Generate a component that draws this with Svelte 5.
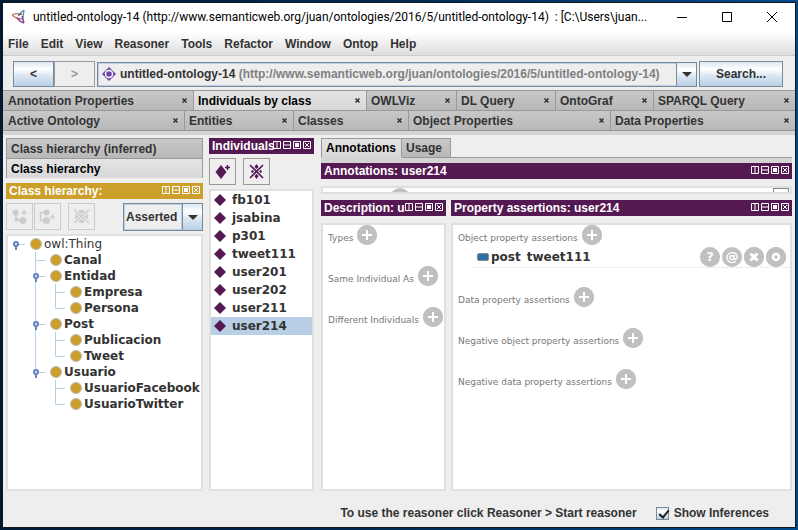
<script>
  const menus = ['File', 'Edit', 'View', 'Reasoner', 'Tools', 'Refactor', 'Window', 'Ontop', 'Help'];

  const tabRows = [
    [
      { label: 'Annotation Properties', share: 190 },
      { label: 'Individuals by class', share: 173, active: true },
      { label: 'OWLViz', share: 90 },
      { label: 'DL Query', share: 99 },
      { label: 'OntoGraf', share: 98 },
      { label: 'SPARQL Query', share: 142 },
    ],
    [
      { label: 'Active Ontology', share: 181 },
      { label: 'Entities', share: 109 },
      { label: 'Classes', share: 115 },
      { label: 'Object Properties', share: 202 },
      { label: 'Data Properties', share: 185 },
    ],
  ];
  const columns = (row) => row.map((tab) => `minmax(0, ${tab.share}fr)`).join(' ');

  // guides, one letter per column: o/m/e = handle (root, middle, end),
  // t/l = branch (middle, end), i = passing line, s = empty
  const tree = [
    { label: 'owl:Thing', guides: 'o', root: true },
    { label: 'Canal', guides: 'st' },
    { label: 'Entidad', guides: 'sm' },
    { label: 'Empresa', guides: 'sit' },
    { label: 'Persona', guides: 'sil' },
    { label: 'Post', guides: 'sm' },
    { label: 'Publicacion', guides: 'sit' },
    { label: 'Tweet', guides: 'sil' },
    { label: 'Usuario', guides: 'se' },
    { label: 'UsuarioFacebook', guides: 'sst' },
    { label: 'UsuarioTwitter', guides: 'ssl' },
  ];

  const lines = {
    o: 'M10 8.5H17',
    m: 'M7.5 0V16M10 8.5H17',
    e: 'M7.5 0V8M10 8.5H17',
    t: 'M7.5 0V16M8 8.5H17',
    l: 'M7.5 0V8.5H17',
    i: 'M7.5 0V16',
    s: '',
  };

  const individuals = ['fb101', 'jsabina', 'p301', 'tweet111', 'user201', 'user202', 'user211', 'user214'];
  let selected = $state('user214');
  let showInferences = $state(true);

  const description = ['Types', 'Same Individual As', 'Different Individuals'];
  const assertions = [
    { label: 'Object property assertions', rows: [{ property: 'post', value: 'tweet111' }] },
    { label: 'Data property assertions', rows: [] },
    { label: 'Negative object property assertions', rows: [] },
    { label: 'Negative data property assertions', rows: [] },
  ];
</script>

{#snippet paneHeader(title, gold)}
  <header class="pane-header" class:gold>
    <h2>{title}</h2>
    <div class="pane-tools">
      <button aria-label="Split vertically"><svg width="8" height="8"><path d="M.5 .5H7.5V7.5H.5ZM4 1V7" /></svg></button>
      <button aria-label="Split horizontally"><svg width="8" height="8"><path d="M.5 .5H7.5V7.5H.5ZM1 4H7" /></svg></button>
      <button aria-label="Float"><svg width="8" height="8"><path d="M.5 .5H7.5V7.5H.5Z" /><rect x="2" y="2" width="4" height="4" /></svg></button>
      <button aria-label="Close"><svg width="8" height="8"><path d="M.5 .5H7.5V7.5H.5ZM2 2L6 6M6 2L2 6" /></svg></button>
    </div>
  </header>
{/snippet}

{#snippet addButton(name)}
  <button class="round" aria-label={'Add ' + name}>
    <svg width="20" height="20"><circle cx="10" cy="10" r="10" /><path d="M10 5V15M5 10H15" /></svg>
  </button>
{/snippet}

<div class="desktop">
  <div class="window">
    <div class="titlebar">
      <svg class="logo" width="16" height="16" viewBox="0 0 16 16" fill="none">
        <path d="M1 6Q5 4 11 5M1 6Q5 10 12 10" stroke="#b9795a" stroke-width="1.2" />
        <path d="M13 1Q10 3 7 7M13 1L12 9" stroke="#4f8fb8" stroke-width="1.2" />
        <path d="M13 14Q9 13 6 9M13 14L11 7" stroke="#80409a" stroke-width="1.4" />
        <path d="M7 6L11 5" stroke="#8a6a60" stroke-width="1.4" />
      </svg>
      <h1>untitled-ontology-14 (http://www.semanticweb.org/juan/ontologies/2016/5/untitled-ontology-14) &nbsp;: [C:\Users\juan...</h1>
      <div class="controls">
        <button aria-label="Minimize"><svg width="12" height="12"><path d="M1 6.5H11" /></svg></button>
        <button aria-label="Maximize"><svg width="12" height="12"><path d="M1.5 1.5H10.5V10.5H1.5Z" /></svg></button>
        <button aria-label="Close window"><svg width="12" height="12"><path d="M1 1L11 11M11 1L1 11" /></svg></button>
      </div>
    </div>

    <nav class="menubar">
      {#each menus as menu}<button>{menu}</button>{/each}
    </nav>

    <div class="toolbar">
      <div class="history">
        <button class="metal" aria-label="Back">&lt;</button>
        <button class="metal" aria-label="Forward" disabled>&gt;</button>
      </div>
      <div class="ontology">
        <svg width="14" height="14"><path d="M7 0L14 7L7 14L0 7Z" fill="#6d45a3" /><circle cx="7" cy="7" r="3.5" fill="none" stroke="#fff" stroke-width="1.4" /></svg>
        <span class="uri">untitled-ontology-14 <small>(http://www.semanticweb.org/juan/ontologies/2016/5/untitled-ontology-14)</small></span>
        <span class="arrow"><svg width="10" height="5"><path d="M0 0H10L5 5Z" /></svg></span>
        <select aria-label="Active ontology"><option>untitled-ontology-14</option></select>
      </div>
      <button class="metal search">Search...</button>
    </div>

    <div class="tabs">
      {#each tabRows as row}
        <div class="tab-row" style:grid-template-columns={columns(row)}>
          {#each row as tab}
            <div class="tab" class:active={tab.active}>
              <button class="tab-name">{tab.label}</button>
              <button class="tab-close" aria-label={'Close ' + tab.label}><svg width="5" height="5"><path d="M.5 .5L4.5 4.5M4.5 .5L.5 4.5" /></svg></button>
            </div>
          {/each}
        </div>
      {/each}
    </div>

    <main>
      <section class="classes">
        <div class="stack-tabs">
          <button>Class hierarchy (inferred)</button>
          <button class="on">Class hierarchy</button>
        </div>
        {@render paneHeader('Class hierarchy:', true)}
        <div class="actions">
          <button class="tool off" aria-label="Add subclass">
            <svg width="17" height="17"><circle cx="4.5" cy="4.5" r="3" /><circle cx="12" cy="12.5" r="3.500" /><circle cx="5.500" cy="11.500" r="2" /><path d="M5 5V12H12M10.500 4.500H15.500M13 2V7" /></svg>
          </button>
          <button class="tool off" aria-label="Add sibling class">
            <svg width="17" height="17"><circle cx="7.5" cy="4.500" r="3" /><circle cx="7.500" cy="12.5" r="3.5" /><path d="M7 4.500H1.500V12.500H7M11 9H16M13.500 6.500V11.500" /></svg>
          </button>
          <button class="tool off last" aria-label="Delete class">
            <svg width="17" height="17"><circle cx="8.5" cy="8.5" r="6.500" /><path class="cut" d="M1 2L16 15M16 2L1 15" /><path d="M1 2L16 15M16 2L1 15" /></svg>
          </button>
          <div class="mode">
            <select aria-label="Hierarchy mode"><option>Asserted</option><option>Inferred</option></select>
            <span class="arrow"><svg width="10" height="5"><path d="M0 0H10L5 5Z" /></svg></span>
          </div>
        </div>
        <ul class="box tree">
          {#each tree as node}
            <li class:root={node.root}>
              {#each node.guides as g}
                <svg width="20" height="16">
                  <path class="line" d={lines[g]} />
                  {#if 'ome'.includes(g)}
                    <circle cx="8" cy="8" r="2" class="knob" /><path d="M8 10V14" class="stem" />
                  {/if}
                </svg>
              {/each}
              <svg width="16" height="16"><circle cx="8" cy="8" r="5.5" class="class-dot" /></svg>
              <span>{node.label}</span>
            </li>
          {/each}
        </ul>
      </section>

      <section class="individuals">
        {@render paneHeader('Individuals', false)}
        <div class="actions">
          <button class="tool wide" aria-label="Add individual">
            <svg width="17" height="17"><path class="solid" d="M7 2L12.500 9L7 16L1.500 9Z" /><path d="M11 4.500H16M13.500 2V7" /></svg>
          </button>
          <button class="tool" aria-label="Delete individual">
            <svg width="17" height="17"><path class="solid" d="M8.500 1L14 8.500L8.500 16L3 8.500Z" /><path class="cut" d="M1 1L16 16M16 1L1 16" /><path d="M2 2L15 15M15 2L2 15" /></svg>
          </button>
        </div>
        <ul class="box list">
          {#each individuals as name}
            <li>
              <button class:selected={selected === name} onclick={() => (selected = name)}>
                <svg width="12" height="12"><path d="M6 0L12 6L6 12L0 6Z" /></svg>{name}
              </button>
            </li>
          {/each}
        </ul>
      </section>

      <section class="details">
        <div class="detail-tabs">
          <button class="on">Annotations</button>
          <button>Usage</button>
        </div>
        {@render paneHeader('Annotations: user214', false)}
        <div class="box sliver">
          <span class="peek"></span>
          <span class="peek-field"></span>
        </div>
        <div class="columns">
          <div class="pane">
            {@render paneHeader('Description: u', false)}
            <div class="box fields">
              {#each description as label}
                <div class="group"><div class="group-head"><span>{label}</span>{@render addButton(label)}</div></div>
              {/each}
            </div>
          </div>
          <div class="pane">
            {@render paneHeader('Property assertions: user214', false)}
            <div class="box fields">
              {#each assertions as group}
                <div class="group">
                  <div class="group-head"><span>{group.label}</span>{@render addButton(group.label)}</div>
                  {#each group.rows as row}
                    <div class="assertion">
                      <i class="property"></i>
                      <b>{row.property}</b>
                      <b class="value">{row.value}</b>
                      <div class="row-tools">
                        <button class="round" aria-label="Explain">?</button>
                        <button class="round" aria-label="Annotate">@</button>
                        <button class="round" aria-label="Remove"><svg width="20" height="20"><circle cx="10" cy="10" r="10" /><path d="M6.500 6.500L13.500 13.500M13.500 6.500L6.500 13.500" class="thick" /></svg></button>
                        <button class="round" aria-label="Edit"><svg width="20" height="20"><circle cx="10" cy="10" r="10" /><circle cx="10" cy="10" r="3" class="ring" /></svg></button>
                      </div>
                    </div>
                  {/each}
                </div>
              {/each}
            </div>
          </div>
        </div>
      </section>
    </main>

    <footer>
      <span>To use the reasoner click Reasoner &gt; Start reasoner</span>
      <label><input type="checkbox" bind:checked={showInferences} />Show Inferences</label>
    </footer>
  </div>
</div>

<style>
  :global(body) { margin: 0; }
  * { box-sizing: border-box; }
  button { font: inherit; color: inherit; background: none; border: 0; padding: 0; }
  ul { list-style: none; margin: 0; padding: 0; }
  svg { display: block; flex: none; }
  h1, h2 { margin: 0; }

  .desktop {
    height: 100vh;
    padding: 3px;
    background: linear-gradient(90deg, #001a36, #002a54 50%, #004a8a);
    font: bold 12px/16px "Liberation Sans", Arial, sans-serif;
    color: #333;
  }
  .window {
    height: 100%;
    display: flex;
    flex-direction: column;
    background: #eee;
    outline: 1px solid #10161c;
  }

  .titlebar { display: flex; align-items: center; height: 28px; padding: 0 6px 0 8px; background: #fff; color: #000; }
  .titlebar h1 { flex: 1; min-width: 0; margin-left: 6px; overflow: hidden; white-space: nowrap; font: 12px/16px Roboto, "Noto Sans", sans-serif; }
  .controls { display: flex; gap: 33px; padding-right: 11px; }
  .controls svg { fill: none; stroke: #000; }

  .menubar { display: flex; gap: 12px; height: 25px; padding: 0 5px; background: linear-gradient(#fff, #ddd); border-bottom: 1px solid #ccc; border-top: 1px solid #fff; }
  .menubar button { padding-left: 0; }

  .toolbar { display: flex; align-items: center; gap: 2px; height: 34px; padding: 2px 12px 0 10px; }
  .history { display: flex; }
  .metal { height: 26px; border: 1px solid #7a8a99; background: linear-gradient(#dde8f3, #fff 30%, #dde8f3 55%, #b8cfe5); }
  .history .metal { width: 41px; }
  .history .metal:disabled { border-color: #999; background: none; color: #999; }
  .search { width: 84px; }
  .ontology { position: relative; flex: 1; min-width: 0; display: flex; align-items: center; height: 25px; padding-left: 4px; border: 1px solid #7a8a99; box-shadow: inset 0 0 0 1px #b8cfe5; }
  .ontology select { position: absolute; inset: 0; width: 100%; opacity: 0; }
  .uri { flex: 1; min-width: 0; margin-left: 4px; overflow: hidden; white-space: nowrap; }
  .uri small { font-size: 12px; color: #808080; }
  .arrow { display: flex; flex: none; align-items: center; justify-content: center; width: 20px; align-self: stretch; border-left: 1px solid #7a8a99; background: linear-gradient(#dde8f3, #fff 30%, #dde8f3 55%, #b8cfe5); }
  .arrow path { fill: #333; }

  .tabs { border-bottom: 4px solid #d4d4d4; }
  .tab-row { display: grid; height: 20px; border-top: 1px solid #999; }
  .tab-row:last-child { height: 21px; border-bottom: 1px solid #999; }
  .tab { display: flex; align-items: center; min-width: 0; padding: 0 6px 0 5px; background: linear-gradient(#c8c8c8, #b8b8b8); }
  .tab + .tab { border-left: 1px solid #999; padding-left: 4px; }
  .tab.active { background: linear-gradient(#e4e4e4, #d8d8d8); color: #000; }
  .tab-name { flex: 1; min-width: 0; overflow: hidden; text-align: left; white-space: nowrap; }
  .tab-close path { stroke: #333; stroke-width: 1.5; fill: none; }

  main { flex: 1; min-height: 0; display: flex; padding: 3px 3px 0; }
  .classes { display: flex; flex-direction: column; width: 197px; margin-right: 6px; }
  .individuals { display: flex; flex-direction: column; width: 105px; margin-right: 7px; }
  .details { display: flex; flex-direction: column; flex: 1; min-width: 0; }

  .stack-tabs { display: flex; flex-direction: column; padding-bottom: 5px; }
  .stack-tabs button { height: 20px; padding-left: 4px; border: 1px solid #999; border-bottom: 0; text-align: left; background: linear-gradient(#c8c8c8, #b8b8b8); }
  .stack-tabs .on { background: linear-gradient(#e4e4e4, #d8d8d8); color: #000; }

  .pane-header { display: flex; align-items: flex-start; flex: none; height: 16px; padding: 0 3px; background: #541852; color: #fff; }
  .pane-header.gold { background: #cc9f2a; }
  .pane-header h2 { flex: 1; min-width: 0; white-space: nowrap; font: inherit; }
  .pane-tools { display: flex; gap: 2px; padding-top: 3px; }
  .pane-tools path { fill: none; stroke: #fff; }
  .pane-tools rect { fill: #fff; }

  .actions { display: flex; align-items: flex-start; height: 35px; padding-top: 4px; }
  .tool { display: flex; align-items: center; justify-content: center; width: 27px; height: 27px; margin-right: 1px; border: 1px solid #999; }
  .tool.off { border-color: #ccc; }
  .tool.off + .last { margin-left: 6px; }
  .tool.wide { margin-right: 7px; }
  .tool path { fill: none; stroke: #541852; stroke-width: 1.6; }
  .tool .solid { fill: #541852; stroke: none; }
  .tool .cut { stroke: #eee; stroke-width: 3.4; }
  .tool.off circle { fill: #ccc; }
  .tool.off path { stroke: #ccc; }
  .tool.off .cut { stroke: #eee; }
  .mode { display: flex; width: 80px; height: 28px; margin-left: auto; border: 1px solid #7a8a99; }
  .mode select { flex: 1; min-width: 0; padding: 0 0 0 1px; border: 1px solid #b8cfe5; border-radius: 0; appearance: none; background: #eee; font: inherit; color: inherit; }

  .box { flex: 1; min-height: 0; overflow: hidden; border: 2px solid #e0e0e0; background: #fff; }
  .tree, .list { font: bold 12px/16px "DejaVu Sans", Verdana, sans-serif; }
  .tree li { display: flex; height: 16px; white-space: nowrap; }
  .tree .root { font-weight: normal; }
  .line { fill: none; stroke: #b8cfe5; }
  .knob { fill: #fff; stroke: #6382bf; stroke-width: 2; }
  .stem { stroke: #6382bf; stroke-width: 2; }
  .class-dot { fill: #cc9f2a; stroke: #bbb; }

  .list button { display: flex; align-items: center; gap: 6px; width: 100%; height: 18px; padding-left: 3px; }
  .list .selected { background: #b8cfe5; }
  .list path { fill: #541852; }

  .detail-tabs { display: flex; flex: none; height: 25px; border-bottom: 5px solid #d4d4d4; }
  .detail-tabs::after { content: ""; flex: 1; border-bottom: 1px solid #999; }
  .detail-tabs button { padding: 0 8px 0 4px; border: 1px solid #999; border-left: 0; background: linear-gradient(#c8c8c8, #b8b8b8); }
  .detail-tabs .on { padding: 0 5px 0 4px; border-left: 1px solid #999; border-bottom-color: #d8d8d8; background: linear-gradient(#e4e4e4, #d8d8d8); color: #000; }

  .sliver { flex: none; display: flex; justify-content: space-between; height: 8px; margin: 7px 0 6px; padding: 0 1px 0 67px; }
  .peek { width: 20px; height: 20px; border-radius: 50%; background: #c0c0c0; }
  .peek-field { width: 16px; height: 16px; border: 1px solid #7a8a99; }

  .columns { flex: 1; min-height: 0; display: grid; grid-template-columns: 125fr 341fr; gap: 5px; }
  .pane { display: flex; flex-direction: column; min-width: 0; }
  .pane .box { margin-top: 7px; }
  .fields { padding-left: 5px; }
  .group { padding-bottom: 19px; }
  .group-head { display: flex; gap: 4px; height: 22px; white-space: nowrap; }
  .group-head span { padding-top: 5px; font: 9px/16px "DejaVu Sans", Verdana, sans-serif; color: #777; }
  .round { flex: none; width: 20px; height: 20px; border-radius: 50%; background: #c0c0c0; color: #fff; font: bold 13px/20px "DejaVu Sans", sans-serif; }
  .round circle { fill: #c0c0c0; }
  .round path { stroke: #fff; stroke-width: 2; }
  .round .thick { stroke-width: 3; }
  .round .ring { fill: none; stroke: #fff; stroke-width: 2.5; }
  .assertion { display: flex; align-items: center; height: 21px; margin-left: 14px; padding: 0 4px 0 5px; border-bottom: 1px solid #eee; font: bold 12px/16px "DejaVu Sans", Verdana, sans-serif; }
  .property { width: 12px; height: 8px; margin-right: 2px; border: 1px solid #888; border-radius: 2px; background: #2f6fa7; }
  .value { margin-left: 6px; }
  .row-tools { display: flex; gap: 2px; margin-left: auto; }

  footer { display: flex; align-items: center; justify-content: flex-end; gap: 19px; height: 36px; padding: 8px 26px 0 0; }
  footer label { display: flex; align-items: center; gap: 5px; }
  footer input { appearance: none; width: 13px; height: 13px; margin: 0; border: 1px solid #7a8a99; background: linear-gradient(#dde8f3, #fff 30%, #b8cfe5); }
  footer input:checked::after { content: ""; display: block; width: 4px; height: 8px; margin: 0 0 0 4px; border: solid #222; border-width: 0 2px 2px 0; transform: rotate(40deg); }
</style>
